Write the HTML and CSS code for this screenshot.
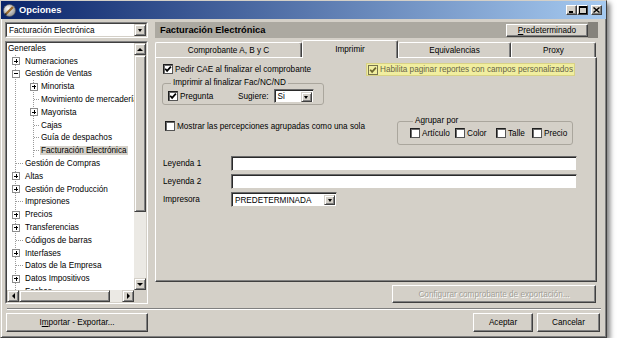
FILE: index.html
```html
<!DOCTYPE html>
<html lang="es">
<head>
  <meta charset="UTF-8">
  <title>Opciones</title>
  <link rel="stylesheet" href="styles.css">
</head>
<body>
  <div class="window">
    <div class="titlebar">
      <span class="app-icon">
        <svg width="13" height="13" viewBox="0 0 13 13">
          <defs>
            <radialGradient id="ic" cx="40%" cy="35%" r="70%">
              <stop offset="0" stop-color="#ffffff"/>
              <stop offset="1" stop-color="#8e8e8e"/>
            </radialGradient>
          </defs>
          <circle cx="6.5" cy="6.5" r="6" fill="url(#ic)" stroke="#5a5a5a" stroke-width="0.6"/>
          <path d="M3 10 L10 3" stroke="#9a6a2e" stroke-width="2.4"/>
          <path d="M2.2 10.8 L3.4 9.6" stroke="#222" stroke-width="1.6"/>
        </svg>
      </span>
      <span class="title">Opciones</span>
      <div class="caption-btns">
        <span class="cbtn min"></span>
        <span class="cbtn max"></span>
        <span class="cbtn close">
          <svg width="7" height="6" viewBox="0 0 7 6"><path d="M0.5 0.5 L6.5 5.5 M6.5 0.5 L0.5 5.5" stroke="#000" stroke-width="1.4"/></svg>
        </span>
      </div>
    </div>

    <div class="main">
      <div class="left">
        <div class="combo">
          <div class="combo-in">
            <span>Facturación Electrónica</span>
            <span class="dd"></span>
          </div>
        </div>

        <div class="tree">
          <div class="tree-in">
            <div class="tree-list">
              <div class="node root">Generales</div>
              <ul class="branch l1">
                <li><div class="node"><span class="exp plus"></span>Numeraciones</div></li>
                <li>
                  <div class="node"><span class="exp minus"></span>Gestión de Ventas</div>
                  <ul class="branch l2">
                    <li><div class="node"><span class="exp plus"></span>Minorista</div></li>
                    <li><div class="node"><span class="leaf"></span>Movimiento de mercaderías</div></li>
                    <li><div class="node"><span class="exp plus"></span>Mayorista</div></li>
                    <li><div class="node"><span class="leaf"></span>Cajas</div></li>
                    <li><div class="node"><span class="leaf"></span>Guía de despachos</div></li>
                    <li><div class="node"><span class="leaf"></span><span class="sel">Facturación Electrónica</span></div></li>
                  </ul>
                </li>
                <li><div class="node"><span class="leaf"></span>Gestión de Compras</div></li>
                <li><div class="node"><span class="exp plus"></span>Altas</div></li>
                <li><div class="node"><span class="exp plus"></span>Gestión de Producción</div></li>
                <li><div class="node"><span class="leaf"></span>Impresiones</div></li>
                <li><div class="node"><span class="exp plus"></span>Precios</div></li>
                <li><div class="node"><span class="exp plus"></span>Transferencias</div></li>
                <li><div class="node"><span class="leaf"></span>Códigos de barras</div></li>
                <li><div class="node"><span class="exp plus"></span>Interfases</div></li>
                <li><div class="node"><span class="leaf"></span>Datos de la Empresa</div></li>
                <li><div class="node"><span class="exp plus"></span>Datos Impositivos</div></li>
                <li><div class="node"><span class="leaf"></span>Fechas</div></li>
              </ul>
            </div>
            <div class="vscroll">
              <span class="sb-btn up"></span>
              <span class="thumb v"></span>
              <span class="track"></span>
              <span class="sb-btn down"></span>
            </div>
            <div class="hscroll">
              <span class="sb-btn lt"></span>
              <span class="thumb h"></span>
              <span class="track"></span>
              <span class="sb-btn rt"></span>
            </div>
            <div class="corner"></div>
          </div>
        </div>
      </div>

      <div class="right">
        <div class="page-head">
          <span class="page-title">Facturación Electrónica</span>
          <button class="btn head-btn"><u>P</u>redeterminado</button>
          <span class="head-end"></span>
        </div>

        <div class="tabs">
          <div class="tab t1">Comprobante A, B y C</div>
          <div class="tab t2 active">Imprimir</div>
          <div class="tab t3">Equivalencias</div>
          <div class="tab t4">Proxy</div>
        </div>

        <div class="panel">
          <div class="top-row">
            <div class="print-col">
              <div class="check">
                <span class="box"><svg width="8" height="8" viewBox="0 0 8 8"><path d="M1.2 3.8 L3.1 5.9 L6.9 1.6" fill="none" stroke="#000" stroke-width="1.7"/></svg></span>
                Pedir CAE al finalizar el comprobante
              </div>
              <fieldset class="group print-group">
                <legend>Imprimir al finalizar Fac/NC/ND</legend>
                <div class="group-row">
                  <div class="check pregunta">
                    <span class="box"><svg width="8" height="8" viewBox="0 0 8 8"><path d="M1.2 3.8 L3.1 5.9 L6.9 1.6" fill="none" stroke="#000" stroke-width="1.7"/></svg></span>
                    Pregunta
                  </div>
                  <span class="sug-label">Sugiere:</span>
                  <div class="field select si">
                    <span>Si</span>
                    <span class="dd"></span>
                  </div>
                </div>
              </fieldset>
            </div>
            <div class="check hl">
              <span class="box"><svg width="8" height="8" viewBox="0 0 8 8"><path d="M1.2 3.8 L3.1 5.9 L6.9 1.6" fill="none" stroke="#6c6630" stroke-width="1.7"/></svg></span>
              Habilita paginar reportes con campos personalizados
            </div>
          </div>

          <div class="mid-row">
            <div class="check mostrar">
              <span class="box"></span>
              Mostrar las percepciones agrupadas como una sola
            </div>
            <fieldset class="group agrupar">
              <legend>Agrupar por</legend>
              <div class="group-row small">
                <div class="check agr a1"><span class="box"></span>Artículo</div>
                <div class="check agr a2"><span class="box"></span>Color</div>
                <div class="check agr a3"><span class="box"></span>Talle</div>
                <div class="check agr"><span class="box"></span>Precio</div>
              </div>
            </fieldset>
          </div>

          <div class="form">
            <span>Leyenda 1</span>
            <div class="field input"></div>
            <span>Leyenda 2</span>
            <div class="field input"></div>
            <span>Impresora</span>
            <div class="field select printer">
              <span>PREDETERMINADA</span>
              <span class="dd"></span>
            </div>
          </div>
        </div>

        <div class="export-row">
          <button class="btn export-btn">Configurar comprobante de exportación...</button>
        </div>
      </div>
    </div>

    <div class="sep"></div>

    <div class="footer">
      <button class="btn import-btn">I<u>m</u>portar - Exportar...</button>
      <div class="footer-right">
        <button class="btn ok-btn">Aceptar</button>
        <button class="btn cancel-btn">Cancelar</button>
      </div>
    </div>
  </div>
</body>
</html>
```

FILE: styles.css
```css
* {
  box-sizing: border-box;
}
body {
  margin: 0;
  background: #fff;
  font-family: "Liberation Sans", Arial, sans-serif;
  font-size: 8.2px;
  color: #000;
}
.window {
  width: 607px;
  height: 338px;
  display: flex;
  flex-direction: column;
  background: #d4d0c8;
  border: 1px solid;
  border-color: #d4d0c8 #404040 #404040 #d4d0c8;
  box-shadow: inset 1px 1px #fff, inset -1px -1px #808080, 3px 3px 5px rgba(0,0,0,0.5);
}

/* title bar */
.titlebar {
  height: 18px;
  display: flex;
  align-items: center;
  padding: 0 4px 0 2px;
  background: linear-gradient(to right, #0a246a, #a6caf0);
  color: #fff;
}
.app-icon svg {
  display: block;
  margin-right: 3px;
}
.title {
  font-weight: bold;
  font-size: 9.3px;
}
.caption-btns {
  margin-left: auto;
  display: flex;
}
.cbtn {
  width: 11px;
  height: 10px;
  display: flex;
  align-items: center;
  justify-content: center;
  background: #d4d0c8;
  border: 1px solid;
  border-color: #fff #404040 #404040 #fff;
  box-shadow: inset -1px -1px #808080;
}
.cbtn.min::after {
  content: "";
  width: 4px;
  height: 2px;
  background: #000;
  margin: 4px 2px 0 0;
}
.cbtn.max::after {
  content: "";
  width: 6px;
  height: 5px;
  border: 1px solid #000;
  border-top-width: 2px;
}
.cbtn.close {
  margin-left: 3px;
}
.cbtn svg {
  display: block;
}

/* layout */
.main {
  display: flex;
  gap: 7px;
  padding: 3px 8px 0 4px;
}
.left {
  width: 143px;
}
.right {
  width: 443px;
}

/* combo */
.combo, .tree {
  border: 1px solid;
  border-color: #808080 #fff #fff #808080;
}
.combo {
  height: 16px;
}
.combo-in, .tree-in {
  height: 100%;
  border: 1px solid;
  border-color: #404040 #d4d0c8 #d4d0c8 #404040;
  background: #fff;
}
.combo-in {
  display: flex;
  align-items: center;
  padding-left: 2px;
}
.dd {
  margin-left: auto;
  width: 12px;
  height: 12px;
  display: flex;
  align-items: center;
  justify-content: center;
  background: #d4d0c8;
  border: 1px solid;
  border-color: #d4d0c8 #404040 #404040 #d4d0c8;
  box-shadow: inset 1px 1px #fff, inset -1px -1px #808080;
}
.dd::after {
  content: "";
  border: 2.5px solid transparent;
  border-top: 3px solid #000;
  border-bottom: 0;
  margin-top: 1px;
}

/* tree */
.tree {
  height: 263px;
  margin-top: 3px;
}
.tree-in {
  display: grid;
  grid-template-columns: 1fr 12px;
  grid-template-rows: 1fr 12px;
}
.tree-list {
  overflow: hidden;
  white-space: nowrap;
  padding-left: 1px;
  margin-top: -1px;
}
.node {
  height: 12.8px;
  display: flex;
  align-items: center;
}
.branch {
  list-style: none;
  margin: 0;
  padding: 0;
  border-left: 1px dotted #9a9a9a;
}
.l1 {
  margin-left: 7px;
}
.l2 {
  margin-left: 17px;
}
.exp {
  flex-shrink: 0;
  width: 8px;
  height: 8px;
  margin: 0 5px 0 -4px;
  border: 1px solid #8c8c8c;
  background: linear-gradient(#000, #000) center / 4px 1px no-repeat, #fff;
}
.exp.plus {
  background: linear-gradient(#000, #000) center / 4px 1px no-repeat,
              linear-gradient(#000, #000) center / 1px 4px no-repeat, #fff;
}
.leaf {
  flex-shrink: 0;
  width: 7px;
  margin-right: 2px;
  border-top: 1px dotted #9a9a9a;
}
.l2 .exp {
  margin-right: 3px;
}
.l2 .leaf {
  width: 5px;
}
.sel {
  background: #d4d0c8;
  padding: 0 1px;
  margin-left: -1px;
}

/* scrollbars */
.vscroll, .hscroll {
  display: flex;
  background: #ebe9e4;
}
.vscroll {
  flex-direction: column;
}
.sb-btn, .thumb, .corner {
  background: #d4d0c8;
}
.sb-btn, .thumb {
  flex-shrink: 0;
  border: 1px solid;
  border-color: #d4d0c8 #404040 #404040 #d4d0c8;
  box-shadow: inset 1px 1px #fff, inset -1px -1px #808080;
}
.sb-btn {
  width: 12px;
  height: 12px;
  display: flex;
  align-items: center;
  justify-content: center;
}
.sb-btn::after {
  content: "";
  border: 3px solid transparent;
}
.sb-btn.up::after {
  border-bottom-color: #000;
  border-top-width: 0;
}
.sb-btn.down::after {
  border-top-color: #000;
  border-bottom-width: 0;
}
.sb-btn.lt::after {
  border-right-color: #000;
  border-left-width: 0;
}
.sb-btn.rt::after {
  border-left-color: #000;
  border-right-width: 0;
}
.thumb.v {
  height: 157px;
}
.thumb.h {
  width: 91px;
}
.track {
  flex: 1;
}

/* page head */
.page-head {
  height: 16px;
  display: flex;
  align-items: center;
  background: #aca9a1;
}
.page-title {
  font-weight: bold;
  font-size: 9.3px;
  padding-left: 5px;
}
.btn {
  font: inherit;
  color: #000;
  padding: 0;
  background: #d4d0c8;
  border: 1px solid;
  border-color: #fff #404040 #404040 #fff;
  box-shadow: inset -1px -1px #808080;
}
.head-btn {
  margin-left: auto;
  width: 82px;
  height: 13px;
}
.head-end {
  width: 10px;
  align-self: stretch;
  background: #86837c;
}

/* tabs */
.tabs {
  height: 17px;
  margin-top: 2px;
  display: flex;
  align-items: flex-end;
}
.tab {
  height: 15px;
  display: flex;
  align-items: center;
  justify-content: center;
  padding-top: 1px;
  background: #d4d0c8;
  border: 1px solid;
  border-bottom: 0;
  border-color: #fff #404040 #404040 #fff;
  border-radius: 2px 2px 0 0;
  box-shadow: inset -1px 0 #808080;
}
.tab.active {
  height: 18px;
  margin-bottom: -1px;
  padding-top: 0;
  position: relative;
  z-index: 1;
}
.t1 { width: 147px; }
.t2 { width: 96px; }
.t3 { width: 113px; }
.t4 { width: 85px; }

/* panel */
.panel {
  width: 442px;
  height: 225px;
  padding: 5px 0 0 7px;
  border: 1px solid;
  border-color: #fff #404040 #404040 #fff;
  box-shadow: inset -1px -1px #808080;
}
.top-row {
  display: flex;
}
.print-col {
  width: 203px;
}
.check {
  display: flex;
  align-items: center;
  height: 12px;
  white-space: nowrap;
}
.box {
  flex-shrink: 0;
  width: 10px;
  height: 10px;
  margin-right: 2px;
  background: #fff;
  border: 1px solid;
  border-color: #1e1e1e #555 #555 #1e1e1e;
  box-shadow: inset 1px 1px #6a6a6a;
}
.box svg {
  display: block;
}
.hl {
  height: 13px;
  padding-left: 1px;
  padding-right: 1px;
  background: #f1ee9f;
  border: 1px solid #d8d286;
  color: #67654a;
}
.hl .box {
  background: #f1ee9f;
  border-color: #77744f;
  box-shadow: none;
}

.group {
  margin: 0;
  padding: 0 5px;
  border: 1px solid #aaa69d;
  border-radius: 3px;
}
.group legend {
  padding: 0 2px;
  margin-left: 3px;
  line-height: 10px;
}
.print-group {
  width: 162px;
  margin: 3px 0 0 -1px;
}
.group-row {
  display: flex;
  align-items: center;
  height: 16px;
}
.pregunta {
  width: 70px;
}
.sug-label {
  margin-right: 5px;
}
.field {
  background: #fff;
  border: 1px solid;
  border-color: #6a6a6a #d4d0c8 #d4d0c8 #6a6a6a;
  box-shadow: inset 1px 1px #2a2a2a;
}
.select {
  display: flex;
  align-items: center;
  padding: 1px 1px 0 3px;
}
.select .dd {
  width: 11px;
  height: 10px;
}
.select.si {
  width: 40px;
  height: 14px;
}

.mid-row {
  display: flex;
  margin-top: 11px;
}
.mostrar {
  width: 232px;
  margin: 4px 0 0 2px;
}
.agrupar {
  width: 176px;
  padding: 0 0 4px 12px;
}
.group-row.small {
  height: 14px;
}
.a1 { width: 45px; }
.a2 { width: 41px; }
.a3 { width: 36px; }

.form {
  margin-top: 11px;
  display: grid;
  grid-template-columns: 68px 346px;
  grid-auto-rows: 15px;
  row-gap: 3px;
  align-items: center;
}
.input {
  height: 15px;
}
.select.printer {
  width: 106px;
  height: 15px;
}

.export-row {
  display: flex;
  justify-content: flex-end;
  margin: 3px 2px 0 0;
}
.export-btn {
  width: 204px;
  height: 18px;
  color: #a29f97;
  text-shadow: 1px 1px #fff;
}

/* footer */
.sep {
  height: 2px;
  margin: 4px 5px 0 6px;
  border-top: 1px solid #808080;
  border-bottom: 1px solid #fff;
}
.footer {
  display: flex;
  margin-top: 3px;
  padding: 0 6px 0 5px;
}
.footer .btn {
  height: 19px;
}
.import-btn {
  width: 142px;
}
.footer-right {
  margin-left: auto;
  display: flex;
  gap: 4px;
}
.ok-btn {
  width: 60px;
}
.cancel-btn {
  width: 63px;
}
```
